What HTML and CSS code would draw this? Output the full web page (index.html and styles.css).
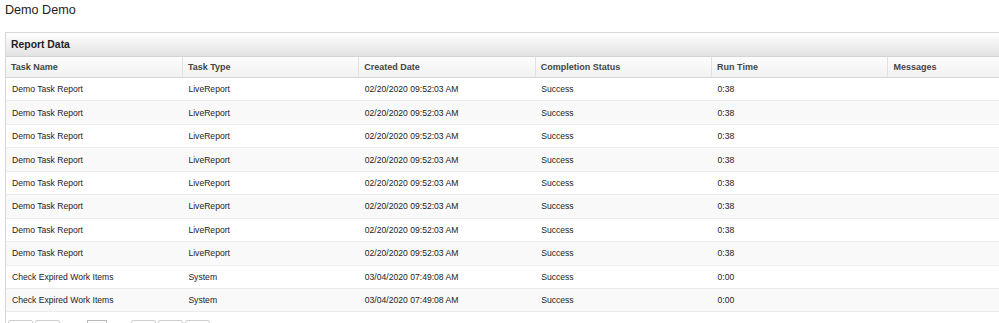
FILE: index.html
```html
<!DOCTYPE html>
<html>
<head>
<meta charset="utf-8">
<link rel="stylesheet" href="styles.css">
</head>
<body>
<div class="page">
  <h1 class="title">Demo Demo</h1>
  <div class="panel">
    <div class="panel-head">Report Data</div>
    <table class="grid">
      <colgroup>
        <col class="c"><col class="c"><col class="c"><col class="c"><col class="c"><col class="c">
      </colgroup>
      <thead>
        <tr><th>Task Name</th><th>Task Type</th><th>Created Date</th><th>Completion Status</th><th>Run Time</th><th>Messages</th></tr>
      </thead>
      <tbody>
        <tr><td>Demo Task Report</td><td>LiveReport</td><td>02/20/2020 09:52:03 AM</td><td>Success</td><td>0:38</td><td></td></tr>
        <tr><td>Demo Task Report</td><td>LiveReport</td><td>02/20/2020 09:52:03 AM</td><td>Success</td><td>0:38</td><td></td></tr>
        <tr><td>Demo Task Report</td><td>LiveReport</td><td>02/20/2020 09:52:03 AM</td><td>Success</td><td>0:38</td><td></td></tr>
        <tr><td>Demo Task Report</td><td>LiveReport</td><td>02/20/2020 09:52:03 AM</td><td>Success</td><td>0:38</td><td></td></tr>
        <tr><td>Demo Task Report</td><td>LiveReport</td><td>02/20/2020 09:52:03 AM</td><td>Success</td><td>0:38</td><td></td></tr>
        <tr><td>Demo Task Report</td><td>LiveReport</td><td>02/20/2020 09:52:03 AM</td><td>Success</td><td>0:38</td><td></td></tr>
        <tr><td>Demo Task Report</td><td>LiveReport</td><td>02/20/2020 09:52:03 AM</td><td>Success</td><td>0:38</td><td></td></tr>
        <tr><td>Demo Task Report</td><td>LiveReport</td><td>02/20/2020 09:52:03 AM</td><td>Success</td><td>0:38</td><td></td></tr>
        <tr><td>Check Expired Work Items</td><td>System</td><td>03/04/2020 07:49:08 AM</td><td>Success</td><td>0:00</td><td></td></tr>
        <tr><td>Check Expired Work Items</td><td>System</td><td>03/04/2020 07:49:08 AM</td><td>Success</td><td>0:00</td><td></td></tr>
      </tbody>
    </table>
    <div class="pager">
      <span class="btn b1"></span>
      <span class="btn b2"></span>
      <span class="lbl"></span>
      <span class="inp"></span>
      <span class="lbl2"></span>
      <span class="btn b3"></span>
      <span class="btn b4"></span>
      <span class="btn b5"></span>
    </div>
  </div>
</div>
</body>
</html>
```

FILE: styles.css
```css
html, body {
  margin: 0;
  padding: 0;
  background: #fff;
  overflow: hidden;
}
.page {
  padding: 0 0 0 5px;
  font-family: "Liberation Sans", Arial, sans-serif;
  color: #333;
  width: 1080px;
}
.title {
  margin: 0;
  padding-top: 2px;
  height: 30px;
  font-size: 12.6px;
  font-weight: normal;
  color: #222;
  line-height: 16px;
}
.panel {
  border: 1px solid #d8d8d8;
  border-right: none;
  width: 1070px;
}
.panel-head {
  height: 23px;
  line-height: 23px;
  padding-left: 5px;
  font-size: 10.4px;
  font-weight: bold;
  color: #222;
  background: linear-gradient(#ffffff, #e2e2e2);
  border-bottom: 1px solid #d4d4d4;
}
.grid {
  border-collapse: collapse;
  table-layout: fixed;
  width: 1058px;
  font-size: 8.6px;
}
.grid col.c { width: 176.4px; }
.grid th {
  height: 20px;
  text-align: left;
  font-size: 9px;
  font-weight: bold;
  color: #444;
  padding: 0 0 0 5px;
  background: linear-gradient(#fcfcfc, #f1f1f1);
  border-bottom: 1px solid #d8d8d8;
  border-left: 1px solid #e2e2e2;
}
.grid th:first-child { border-left: none; }
.grid td {
  height: 22.44px;
  padding: 0 0 0 6px;
  color: #222;
  border-bottom: 1px solid #ececec;
  white-space: nowrap;
}
.grid tbody tr:nth-child(even) td { background: #f9f9f9; }
.pager {
  display: flex;
  align-items: flex-start;
  padding: 8px 0 0 2px;
  gap: 2px;
  height: 20px;
}
.btn {
  width: 23px;
  height: 18px;
  border: 1px solid #cfcfcf;
  border-radius: 2px;
  background: linear-gradient(#fff, #eee);
}
.lbl { width: 23px; }
.inp {
  width: 18px;
  height: 18px;
  border: 1px solid #bbb;
  background: #fff;
}
.lbl2 { width: 20px; }
```
